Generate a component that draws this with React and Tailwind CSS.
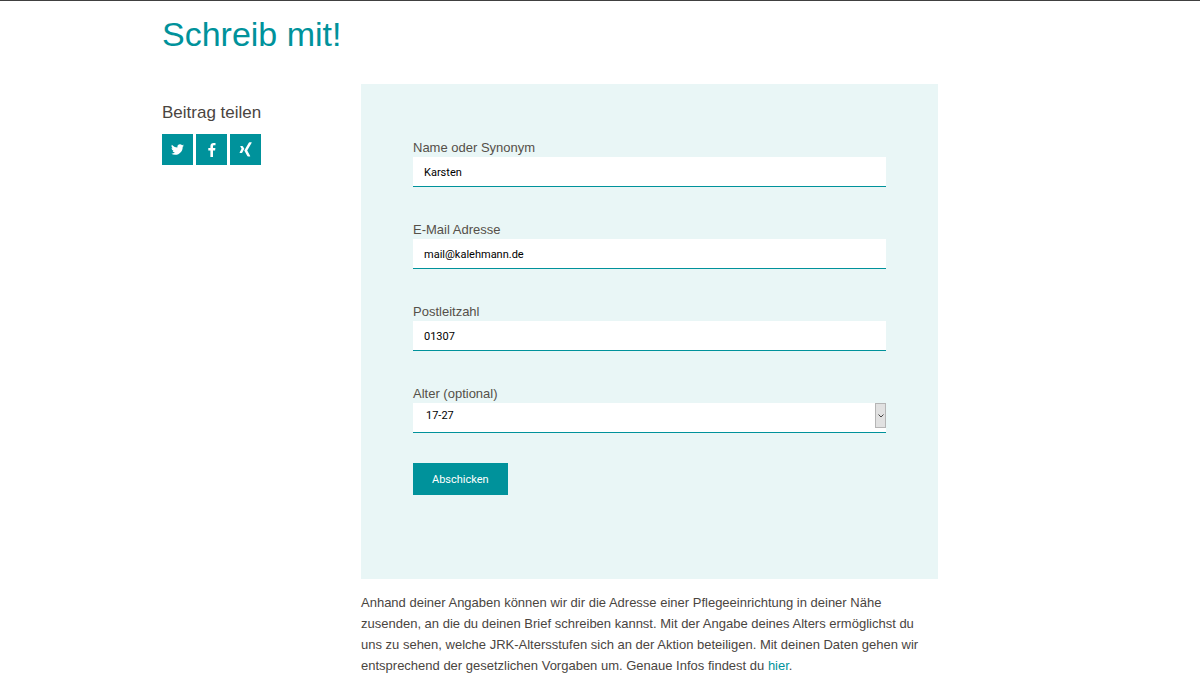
import React from 'react';

const control =
  "block w-full border-b border-[#00929b] bg-white text-[11px] leading-4 text-black outline-none font-['Roboto',sans-serif]";

function Field({ id, label, children }) {
  return (
    <div>
      <label htmlFor={id} className="block pt-px text-[13px] leading-[19px] text-[#555049]">
        {label}
      </label>
      {children}
    </div>
  );
}

function TextField({ id, label, type, value }) {
  return (
    <Field id={id} label={label}>
      <input id={id} name={id} type={type} defaultValue={value} className={`${control} h-[30px] px-[11px] pt-0.5`} />
    </Field>
  );
}

function ShareLink({ label, children }) {
  return (
    <a href="#teilen" aria-label={label} className="flex size-[31px] items-center justify-center bg-[#00929b] text-white">
      {children}
    </a>
  );
}

export default function App() {
  return (
    <div className="min-h-screen border-t border-[#404040] bg-white font-['Liberation_Sans',Arial,sans-serif] text-[#4a453f]">
      <main className="mx-auto max-w-[876px] pb-2 pt-3">
        <h1 className="text-[34px] leading-[42px] text-[#00929b]">Schreib mit!</h1>
        <div className="mt-[29px] flex">
          <aside className="w-[199px] shrink-0 pt-[17px]">
            <h2 className="text-[17px] leading-6">Beitrag teilen</h2>
            <div className="mt-[9px] flex gap-[3px]">
              <ShareLink label="Twitter">
                <svg viewBox="0 0 24 24" className="size-[13px]" fill="currentColor" aria-hidden="true">
                  <path d="M23.95 4.57a10 10 0 0 1-2.82.77 4.96 4.96 0 0 0 2.16-2.72c-.95.55-2 .95-3.13 1.18a4.92 4.92 0 0 0-8.38 4.48C7.69 8.09 4.07 6.13 1.64 3.16a4.82 4.82 0 0 0-.67 2.48c0 1.71.87 3.21 2.19 4.1a4.9 4.9 0 0 1-2.23-.62v.06a4.92 4.92 0 0 0 3.95 4.83 5 5 0 0 1-2.21.08 4.94 4.94 0 0 0 4.6 3.42A9.87 9.87 0 0 1 0 19.54a13.99 13.99 0 0 0 7.56 2.21c9.05 0 14-7.5 14-13.98 0-.21 0-.42-.02-.63a9.94 9.94 0 0 0 2.46-2.55z" />
                </svg>
              </ShareLink>
              <ShareLink label="Facebook">
                <svg viewBox="0 0 8 14" className="h-[14px] w-2" fill="currentColor" aria-hidden="true">
                  <path d="M7.5.1v2.2H6.2c-1 0-1.2.5-1.2 1.2V5h2.4l-.3 2.4H5V14H2.4V7.4H.3V5h2.1V3.2C2.4 1.1 3.7 0 5.6 0c.9 0 1.7.1 1.9.1z" />
                </svg>
              </ShareLink>
              <ShareLink label="Xing">
                <svg viewBox="0 0 14 16" className="h-4 w-[14px]" fill="currentColor" aria-hidden="true">
                  <path d="M5.3 6.8 3.3 10.5c-.2.4-.4.5-.7.5H.9c-.3 0-.4-.2-.3-.5l2-3.700-1.300-2.300c-.2-.3 0-.5.3-.5h1.700c.3 0 .5.2.7.5zM12.700.800 8.200 8.400l3 5.500c.2.300 0 .5-.3.500H9c-.3 0-.5-.2-.7-.5L5.300 8.400 9.800.8c.2-.3.400-.5.7-.5h1.900c.3 0 .5.200.3.500z" />
                </svg>
              </ShareLink>
            </div>
          </aside>
          <section className="min-w-0 max-w-[577px] flex-1">
            <form
              onSubmit={(event) => event.preventDefault()}
              className="bg-[#e9f6f6] px-[52px] pb-[84px] pt-[53px]"
            >
              <div className="space-y-8">
                <TextField id="name" label="Name oder Synonym" type="text" value="Karsten" />
                <TextField id="email" label="E-Mail Adresse" type="email" value="mail@kalehmann.de" />
                <TextField id="plz" label="Postleitzahl" type="text" value="01307" />
                <Field id="alter" label="Alter (optional)">
                  <div className="relative">
                    <select id="alter" name="alter" defaultValue="17-27" className={`${control} h-[30px] appearance-none pb-1 pl-[13px] pr-4`}>
                      <option>17-27</option>
                    </select>
                    <span className="pointer-events-none absolute right-0 top-0 flex h-[25px] w-[11px] items-center justify-center border border-[#b5b5b5] bg-[#e1e1e1]">
                      <svg viewBox="0 0 6 4" className="h-1 w-1.5" fill="none" stroke="#444" aria-hidden="true">
                        <path d="m.5.5 2.5 2.5L5.5.5" />
                      </svg>
                    </span>
                  </div>
                </Field>
              </div>
              <button type="submit" className="mt-[30px] block h-8 bg-[#00929b] px-[19px] pt-0.5 text-[11px] leading-4 text-white font-['Roboto',sans-serif]">
                Abschicken
              </button>
            </form>
            <p className="mt-[13px] text-[13px] leading-[21px]">
              Anhand deiner Angaben können wir dir die Adresse einer Pflegeeinrichtung in deiner Nähe zusenden, an die du
              deinen Brief schreiben kannst. Mit der Angabe deines Alters ermöglichst du uns zu sehen, welche
              JRK-Altersstufen sich an der Aktion beteiligen. Mit deinen Daten gehen wir entsprechend der gesetzlichen
              Vorgaben um. Genaue Infos findest du <a href="#datenschutz" className="text-[#00929b]">hier</a>.
            </p>
          </section>
        </div>
      </main>
    </div>
  );
}
